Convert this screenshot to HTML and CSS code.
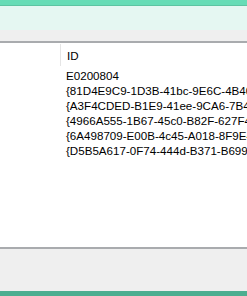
FILE: index.html
```html
<!DOCTYPE html>
<html lang="en">
    <head>
        <meta charset="UTF-8" />
        <title>Device IDs</title>
        <link rel="stylesheet" href="styles.css">
    </head>
    <body>
        <div id="window">
            <div class="top-bar"></div>
            <div class="title-area"></div>
            <div class="toolbar"></div>
            <div class="list">
                <div class="list-header">
                    <div class="col-name"></div>
                    <div class="col-id">ID</div>
                </div>
                <div class="row"><div class="col-name"></div><div class="col-id">E0200804</div></div>
                <div class="row"><div class="col-name"></div><div class="col-id">{81D4E9C9-1D3B-41bc-9E6C-4B40BF79E35E}</div></div>
                <div class="row"><div class="col-name"></div><div class="col-id">{A3F4CDED-B1E9-41ee-9CA6-7B4D0DE6CB0A}</div></div>
                <div class="row"><div class="col-name"></div><div class="col-id">{4966A555-1B67-45c0-B82F-627F4B3C9E21}</div></div>
                <div class="row"><div class="col-name"></div><div class="col-id">{6A498709-E00B-4c45-A018-8F9E4C6B1D0F}</div></div>
                <div class="row"><div class="col-name"></div><div class="col-id">{D5B5A617-0F74-444d-B371-B699C2D3E8A5}</div></div>
            </div>
            <div class="status"></div>
            <div class="bottom-bar"></div>
        </div>
    </body>
</html>
```
FILE: styles.css
```css
body {
    margin: 0;
    background-color: #efefef;
    font-family: "Liberation Sans", Arial, sans-serif;
    font-size: 11.6px;
    color: #000;
}
#window {
    display: flex;
    flex-direction: column;
    height: 296px;
    overflow: hidden;
}
.top-bar {
    height: 5px;
    background-color: #66dcb6;
    border-bottom: 1px solid #5cc4a2;
}
.title-area {
    height: 24px;
    background-color: #e5f7f2;
}
.toolbar {
    height: 11px;
    background-color: #efefef;
}
.list {
    flex: 1;
    background-color: #fff;
    border-top: 2px solid #a9abae;
    border-bottom: 2px solid #a9abae;
    overflow: hidden;
}
.list-header {
    display: flex;
    align-items: center;
    height: 24px;
    margin-bottom: 1px;
}
.list-header .col-name {
    height: 22px;
    border-right: 1px solid #e5e5e5;
}
.row {
    display: flex;
    align-items: center;
    height: 15px;
}
.col-name {
    width: 60px;
    flex-shrink: 0;
}
.col-id {
    padding-left: 6px;
    white-space: nowrap;
}
.status {
    height: 42px;
    background-color: #efefef;
}
.bottom-bar {
    height: 5px;
    background-color: #4cae90;
}
```
